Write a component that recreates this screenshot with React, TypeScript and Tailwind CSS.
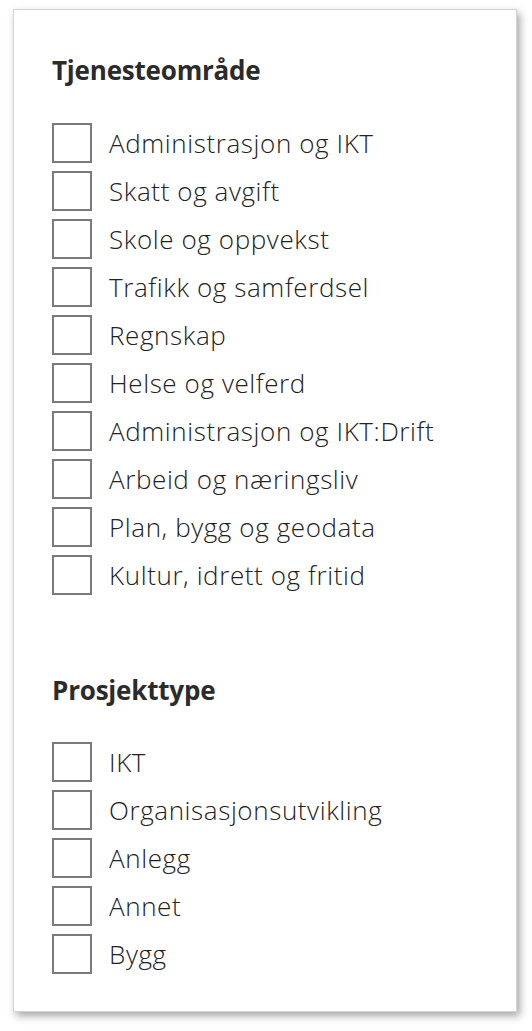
const tjenester = [
  'Administrasjon og IKT',
  'Skatt og avgift',
  'Skole og oppvekst',
  'Trafikk og samferdsel',
  'Regnskap',
  'Helse og velferd',
  'Administrasjon og IKT:Drift',
  'Arbeid og næringsliv',
  'Plan, bygg og geodata',
  'Kultur, idrett og fritid',
];

const prosjekttyper = ['IKT', 'Organisasjonsutvikling', 'Anlegg', 'Annet', 'Bygg'];

function CheckRow({ label }: { label: string }) {
  return (
    <label className="flex items-center gap-[17px] h-[40px] cursor-pointer">
      <span className="w-[40px] h-[40px] border-2 border-[#7a7a7a] bg-white shrink-0" />
      <span className="text-[26px] font-light text-[#222222] leading-none tracking-[0.6px]">{label}</span>
    </label>
  );
}

export default function App() {
  return (
    <div className="w-[532px] h-[1031px] bg-white pt-[9px] pl-[13px]" style={{ fontFamily: '"Open Sans", "Noto Sans", sans-serif' }}>
      <div className="w-[504px] h-[1003px] bg-white border border-[#d4d4d4] shadow-[3px_4px_8px_rgba(0,0,0,0.35)] pl-[38px] pt-[44px]">
        <h2 className="text-[26px] font-bold text-[#2b2b2b] leading-[32px] tracking-[-0.2px]">Tjenesteområde</h2>
        <div className="flex flex-col gap-[8px] mt-[37px]">
          {tjenester.map(t => <CheckRow key={t} label={t} />)}
        </div>
        <h2 className="text-[26px] font-bold text-[#2b2b2b] leading-[32px] tracking-[-0.2px] mt-[79px]">Prosjekttype</h2>
        <div className="flex flex-col gap-[8px] mt-[36px]">
          {prosjekttyper.map(t => <CheckRow key={t} label={t} />)}
        </div>
      </div>
    </div>
  );
}
